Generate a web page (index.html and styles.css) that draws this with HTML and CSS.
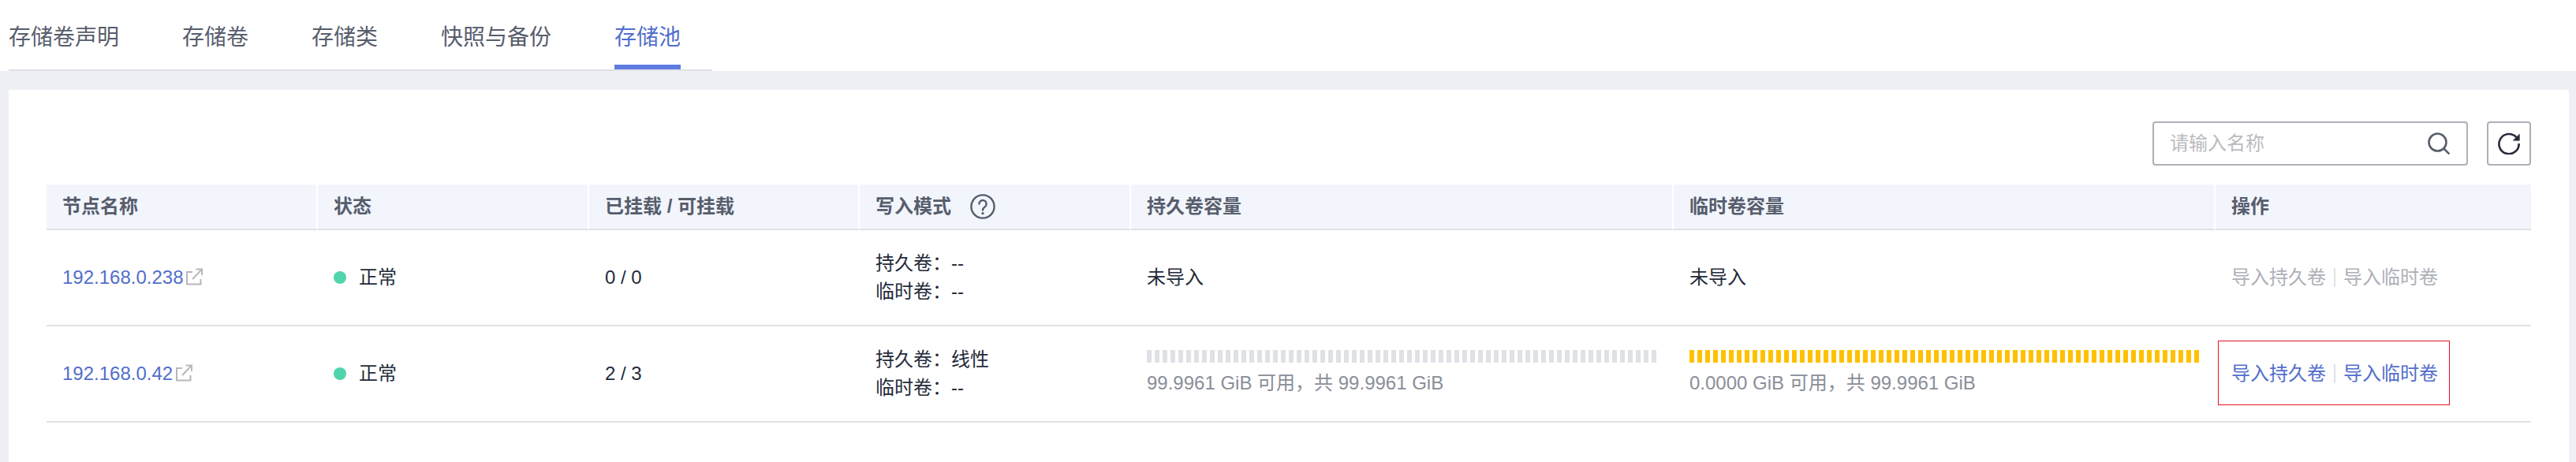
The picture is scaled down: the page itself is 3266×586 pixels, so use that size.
FILE: index.html
```html
<!DOCTYPE html>
<html lang="zh-CN">
<head>
    <meta charset="UTF-8">
    <meta name="viewport" content="width=device-width, initial-scale=1.0">
    <title>存储池</title>
    <link rel="stylesheet" href="styles.css">
</head>
<body>
    <nav class="tabs-bar">
        <ul class="tabs">
            <li class="tab">存储卷声明</li>
            <li class="tab">存储卷</li>
            <li class="tab">存储类</li>
            <li class="tab">快照与备份</li>
            <li class="tab tab-active">存储池</li>
        </ul>
    </nav>

    <main class="content">
        <section class="card">
            <div class="toolbar">
                <div class="search-box">
                    <input class="search-input" type="text" placeholder="请输入名称">
                    <svg class="icon-search" width="28" height="28" viewBox="0 0 28 28" fill="none" stroke="#575d6c" stroke-width="2.6" stroke-linecap="round">
                        <circle cx="12.5" cy="12.5" r="11"/>
                        <path d="M21 21l5.6 5.6"/>
                    </svg>
                </div>
                <button class="refresh-btn" type="button" aria-label="刷新">
                    <svg width="28" height="28" viewBox="0 0 28 28" fill="none" stroke="#252b3a" stroke-width="2.6">
                        <path d="M23.4 6.2A12.6 12.6 0 1 0 26.6 14"/>
                        <path d="M27.6 1.6V10.6H18.6z" fill="#252b3a" stroke="none"/>
                    </svg>
                </button>
            </div>

            <table class="pool-table">
                <colgroup>
                    <col class="col-node">
                    <col class="col-status">
                    <col class="col-mount">
                    <col class="col-mode">
                    <col class="col-cap">
                    <col class="col-cap-temp">
                    <col class="col-ops">
                </colgroup>
                <thead>
                    <tr>
                        <th>节点名称</th>
                        <th>状态</th>
                        <th>已挂载 / 可挂载</th>
                        <th>
                            <span class="th-help">写入模式
                                <svg class="icon-help" width="32" height="32" viewBox="0 0 32 32" fill="none" stroke="#575d6c" stroke-width="2.4">
                                    <circle cx="16" cy="16" r="14.6"/>
                                    <path d="M11.4 12.6a4.6 4.6 0 1 1 7.4 3.7c-1.7 1.2-2.8 2-2.8 4.2" stroke-linecap="round"/>
                                    <circle cx="16" cy="24.6" r="1.7" fill="#575d6c" stroke="none"/>
                                </svg>
                            </span>
                        </th>
                        <th>持久卷容量</th>
                        <th>临时卷容量</th>
                        <th>操作</th>
                    </tr>
                </thead>
                <tbody>
                    <tr>
                        <td>
                            <a class="node-link" href="#">192.168.0.238<svg class="icon-open" width="22" height="22" viewBox="0 0 22 22" fill="none" stroke="#b8b8b8" stroke-width="2"><path d="M9 5H2v15.5h17.5V14"/><path d="M9 14L20 2.5"/><path d="M13.5 1.5H21V9"/></svg></a>
                        </td>
                        <td><span class="status"><i class="dot"></i>正常</span></td>
                        <td>0 / 0</td>
                        <td>
                            <div class="mode-line">持久卷：--</div>
                            <div class="mode-line">临时卷：--</div>
                        </td>
                        <td>未导入</td>
                        <td>未导入</td>
                        <td>
                            <div class="ops ops-disabled">
                                <a href="#">导入持久卷</a><span class="sep"></span><a href="#">导入临时卷</a>
                            </div>
                        </td>
                    </tr>
                    <tr>
                        <td>
                            <a class="node-link" href="#">192.168.0.42<svg class="icon-open" width="22" height="22" viewBox="0 0 22 22" fill="none" stroke="#b8b8b8" stroke-width="2"><path d="M9 5H2v15.5h17.5V14"/><path d="M9 14L20 2.5"/><path d="M13.5 1.5H21V9"/></svg></a>
                        </td>
                        <td><span class="status"><i class="dot"></i>正常</span></td>
                        <td>2 / 3</td>
                        <td>
                            <div class="mode-line">持久卷：线性</div>
                            <div class="mode-line">临时卷：--</div>
                        </td>
                        <td>
                            <div class="bar"></div>
                            <div class="bar-text">99.9961 GiB 可用，共 99.9961 GiB</div>
                        </td>
                        <td>
                            <div class="bar bar-full"></div>
                            <div class="bar-text">0.0000 GiB 可用，共 99.9961 GiB</div>
                        </td>
                        <td>
                            <div class="ops ops-marked">
                                <a href="#">导入持久卷</a><span class="sep"></span><a href="#">导入临时卷</a>
                            </div>
                        </td>
                    </tr>
                </tbody>
            </table>
        </section>
    </main>
</body>
</html>
```

FILE: styles.css
```css
* {
box-sizing: border-box;
}

html, body {
height: 100%;
}

body {
margin: 0;
display: flex;
flex-direction: column;
overflow: hidden;
background-color: #eef0f5;
color: #252b3a;
font-family: "Liberation Sans", "Noto Sans CJK SC", sans-serif;
font-size: 24px;
line-height: 36px;
}

/* tabs */
.tabs-bar {
height: 90px;
padding-left: 11px;
background-color: #fff;
}

.tabs {
display: inline-flex;
gap: 80px;
height: 90px;
margin: 0;
padding: 0 40px 0 0;
list-style: none;
border-bottom: 2px solid #dfe1e6;
}

.tab {
height: 88px;
padding-top: 28px;
font-size: 28px;
line-height: 40px;
color: #575d6c;
}

.tab-active {
color: #526ecc;
border-bottom: 6px solid #5e7ce0;
}

/* card */
.content {
flex: 1;
display: flex;
padding: 24px 9px 0 11px;
}

.card {
flex: 1;
padding: 40px 48px 0;
background-color: #fff;
}

.toolbar {
display: flex;
justify-content: flex-end;
gap: 24px;
margin-bottom: 24px;
}

.search-box {
display: flex;
align-items: center;
width: 400px;
height: 56px;
padding: 0 21px 0 20px;
border: 2px solid #adb0b8;
border-radius: 4px;
}

.search-input {
flex: 1;
min-width: 0;
padding: 0;
border: none;
outline: none;
font: inherit;
color: #252b3a;
}

.search-input::placeholder {
color: #babbc0;
opacity: 1;
}

.refresh-btn {
display: flex;
align-items: center;
justify-content: center;
width: 56px;
height: 56px;
padding: 0;
background: #fff;
border: 2px solid #adb0b8;
border-radius: 4px;
}

/* table */
.pool-table {
width: 3150px;
table-layout: fixed;
border-collapse: separate;
border-spacing: 0;
}

.col-node, .col-status, .col-mode { width: 344px; }
.col-mount { width: 343px; }
.col-cap { width: 688px; }
.col-cap-temp { width: 687px; }
.col-ops { width: 400px; }

th, td {
padding: 0 0 0 20px;
text-align: left;
border-bottom: 2px solid #dfe1e6;
}

th {
height: 58px;
background-color: #f2f5fc;
border-right: 2px solid #fff;
font-weight: bold;
color: #575d6c;
}

th:last-child {
border-right: none;
}

td {
height: 122px;
}

.th-help {
display: inline-flex;
align-items: center;
gap: 24px;
}

.node-link {
display: inline-flex;
align-items: center;
color: #526ecc;
text-decoration: none;
}

.icon-open {
margin-left: 3px;
margin-top: -3px;
}

.status {
display: inline-flex;
align-items: center;
}

.dot {
width: 16px;
height: 16px;
margin-right: 16px;
border-radius: 50%;
background-color: #50d4ab;
}

.bar {
width: 646px;
height: 16px;
margin-bottom: 8px;
background: repeating-linear-gradient(90deg, #dfe1e6 0 6px, transparent 6px 10px);
}

.bar-full {
background: repeating-linear-gradient(90deg, #ffc000 0 6px, transparent 6px 10px);
}

.bar-text {
color: #8a8e99;
}

.ops {
position: relative;
display: inline-flex;
align-items: center;
}

.ops a {
color: #526ecc;
text-decoration: none;
}

.ops-disabled a {
color: #adb0b8;
}

.sep {
width: 2px;
height: 24px;
margin: 0 10px;
background-color: #dfe1e6;
}

/* red frame around the actions */
.ops-marked::after {
content: "";
position: absolute;
top: -24px;
right: -15px;
bottom: -22px;
left: -17px;
border: 1px solid #e81123;
}
```
